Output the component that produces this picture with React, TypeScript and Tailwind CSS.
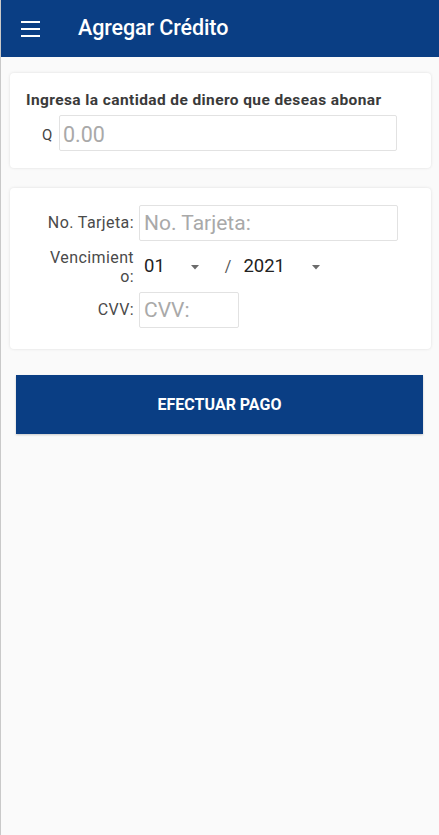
import React from "react";

function Caret() {
  return (
    <svg width="8" height="5" viewBox="0 0 8 5" className="block">
      <path d="M0 0 L8 0 L4 4.5 Z" fill="#6b6b6b" />
    </svg>
  );
}

export default function App() {
  return (
    <div
      className="w-[439px] h-[835px] bg-[#fafafa] flex flex-col border-l border-[#c9c9c9]"
      style={{ fontFamily: "Roboto, 'Liberation Sans', sans-serif" }}
    >
      <header className="h-[57px] bg-[#0a3e84] flex items-center shrink-0">
        <div className="w-[19px] ml-[20px] flex flex-col gap-[5px]">
          <div className="h-[2px] bg-white" />
          <div className="h-[2px] bg-white" />
          <div className="h-[2px] bg-white" />
        </div>
        <h1 className="ml-[38px] text-white text-[21.5px] font-medium tracking-[-0.1px]">
          Agregar Crédito
        </h1>
      </header>

      <div className="pl-[9px] pr-[8px] pt-[16px]">
        <div className="bg-white rounded-[4px] shadow-[0_0_3px_rgba(0,0,0,0.12)] pt-[17px] pb-[17px] pl-[16px]">
          <p className="text-[15.5px] font-bold text-[#3a3a3a] leading-[20px] tracking-[0.4px]">
            Ingresa la cantidad de dinero que deseas abonar
          </p>
          <div className="mt-[5px] flex items-center">
            <span className="ml-[16px] w-[11px] pt-[4px] text-[15px] text-[#444] leading-none">Q</span>
            <div className="ml-[6px] w-[338px] h-[36px] border border-[#e2e2e2] rounded-[2px] flex items-center pl-[3px]">
              <span className="pt-[4px] text-[21.5px] text-[#a9a9a9] leading-none">0.00</span>
            </div>
          </div>
        </div>

        <div className="mt-[20px] bg-white rounded-[4px] shadow-[0_0_3px_rgba(0,0,0,0.12)] pt-[17px] pb-[21px]">
          <div className="flex items-center">
            <div className="w-[124px] text-right text-[16px] text-[#4a4a4a] tracking-[0.4px]">No. Tarjeta:</div>
            <div className="ml-[5px] w-[259px] h-[36px] border border-[#e2e2e2] rounded-[2px] flex items-center pl-[4px]">
              <span className="pt-[2px] text-[21px] text-[#a9a9a9]">No. Tarjeta:</span>
            </div>
          </div>
          <div className="flex items-center mt-[4px] h-[44px]">
            <div className="w-[124px] text-right text-[16px] text-[#4a4a4a] leading-[19px] tracking-[0.4px]">
              Vencimient
              <br />
              o:
            </div>
            <div className="ml-[10px] flex items-center">
              <span className="text-[18.5px] text-[#222]">01</span>
              <span className="ml-[26px]">
                <Caret />
              </span>
              <span className="ml-[26px] text-[16px] text-[#555]">/</span>
              <span className="ml-[12px] text-[18.5px] text-[#222]">2021</span>
              <span className="ml-[27px]">
                <Caret />
              </span>
            </div>
          </div>
          <div className="flex items-center mt-[3px]">
            <div className="w-[124px] text-right text-[16px] text-[#4a4a4a] tracking-[0.4px]">CVV:</div>
            <div className="ml-[5px] w-[100px] h-[36px] border border-[#e2e2e2] rounded-[2px] flex items-center pl-[4px]">
              <span className="pt-[2px] text-[21px] text-[#a9a9a9]">CVV:</span>
            </div>
          </div>
        </div>

        <button className="mt-[26px] ml-[6px] w-[407px] h-[59px] bg-[#0a3e84] text-white text-[16px] font-bold flex items-center justify-center shadow-[0_1px_2px_rgba(0,0,0,0.2)]">
          EFECTUAR PAGO
        </button>
      </div>
    </div>
  );
}
